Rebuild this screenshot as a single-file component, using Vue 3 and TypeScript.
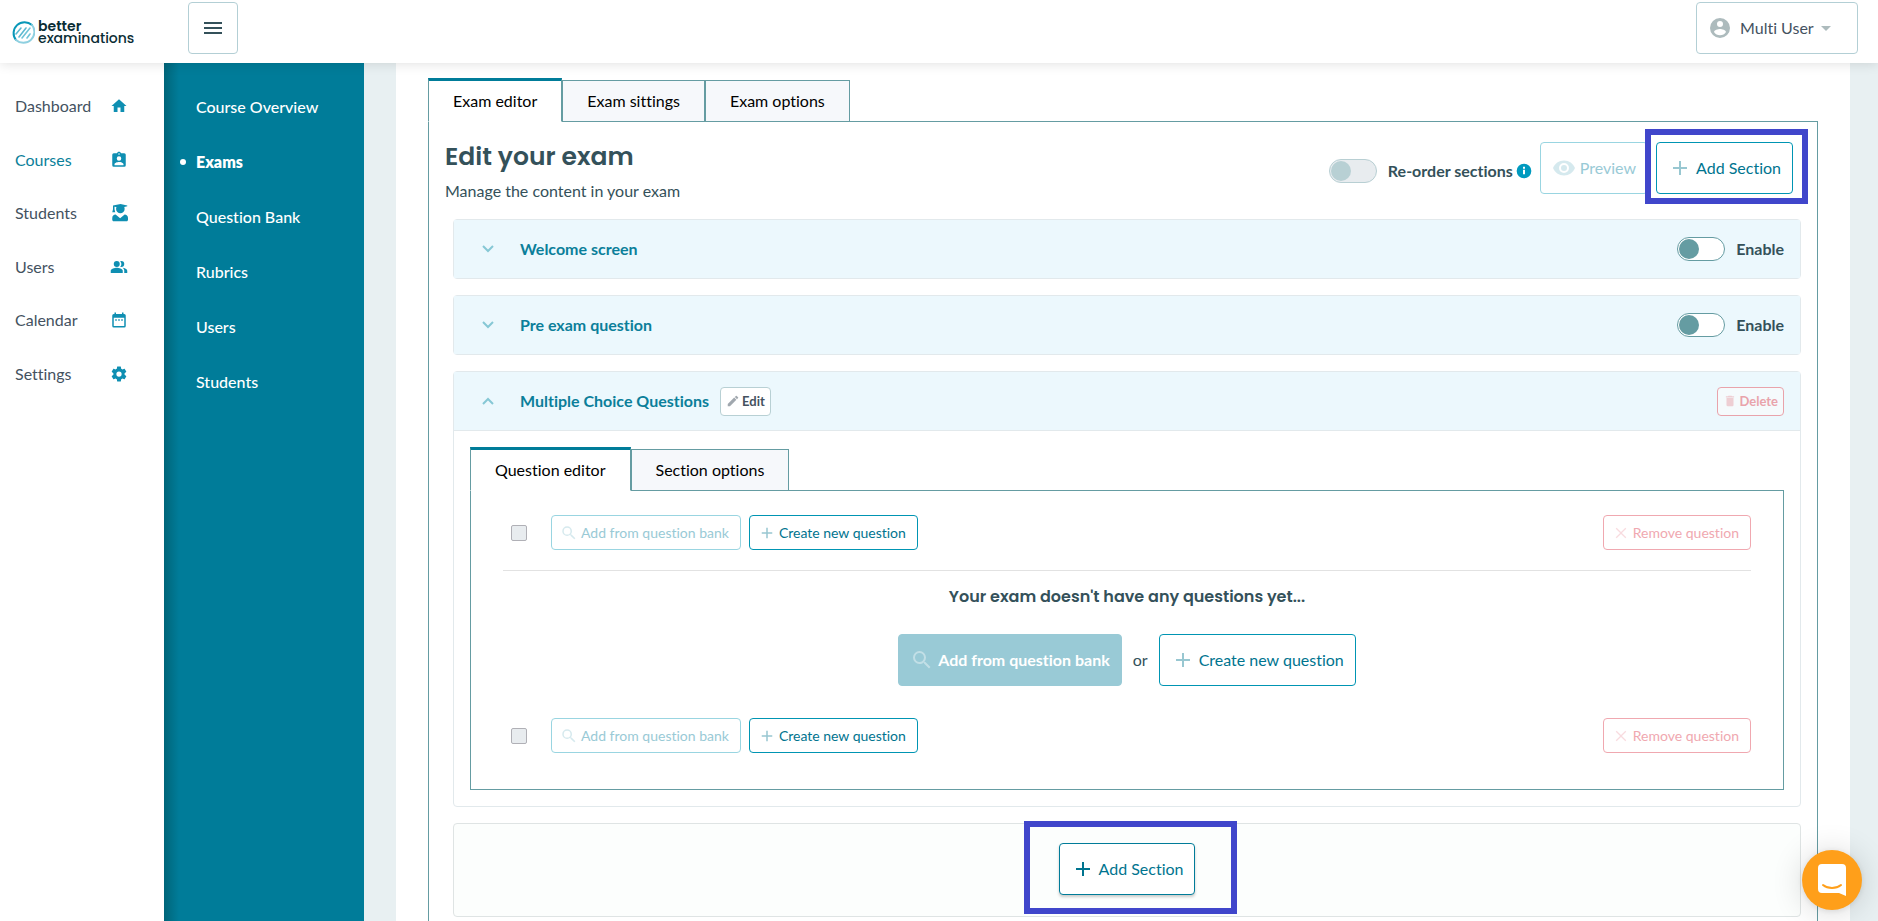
<script setup lang="ts">
import { ref } from 'vue'

interface NavItem {
  label: string
  icon: string
  active?: boolean
}

const icons: Record<string, string> = {
  home: 'M10 20v-6h4v6h5v-8h3L12 3 2 12h3v8z',
  badge:
    'M19 3h-4.18C14.4 1.84 13.3 1 12 1s-2.4.84-2.82 2H5a2 2 0 0 0-2 2v14a2 2 0 0 0 2 2h14a2 2 0 0 0 2-2V5a2 2 0 0 0-2-2zm-7 0a1 1 0 1 1 0 2 1 1 0 0 1 0-2zm0 4a3 3 0 1 1 0 6 3 3 0 0 1 0-6zm6 12H6v-1.4c0-2 4-3.1 6-3.1s6 1.1 6 3.1z',
  graduate:
    'M4 2 14 0l9 2v1l-4 1c.3.8.5 1.6.5 2.500a5.700 5.700 0 0 1-11.400 0c0-.9.2-1.700.5-2.500L6 3.600V7l1 4H3l1-4zM3 21v-2.500c0-2.500 2-4.300 4.500-4.500l6 5 6-5c2.500.2 4.500 2 4.500 4.500V21c0 1.200-.8 2-2 2H5c-1.200 0-2-.8-2-2z',
  people:
    'M16.67 13.13C18.04 14.06 19 15.32 19 17v3h4v-3c0-2.18-3.57-3.47-6.33-3.87zM15 12a4 4 0 0 0 0-8c-.47 0-.91.1-1.33.24a5.98 5.98 0 0 1 0 7.52c.42.14.86.24 1.33.24zM9 12a4 4 0 1 0 0-8 4 4 0 0 0 0 8zm0 1c-2.67 0-8 1.34-8 4v3h16v-3c0-2.66-5.33-4-8-4z',
  calendar:
    'M9 11H7v2h2zm4 0h-2v2h2zm4 0h-2v2h2zm2-7h-1V2h-2v2H8V2H6v2H5a2 2 0 0 0-2 2v14a2 2 0 0 0 2 2h14a2 2 0 0 0 2-2V6a2 2 0 0 0-2-2zm0 16H5V9h14z',
  gear:
    'M19.43 12.98c.04-.32.07-.64.07-.98s-.03-.66-.07-.98l2.11-1.65c.19-.15.24-.42.12-.64l-2-3.46c-.12-.22-.39-.3-.61-.22l-2.49 1c-.52-.4-1.08-.73-1.69-.98l-.38-2.65A.49.49 0 0 0 14 2h-4c-.25 0-.46.18-.49.42l-.38 2.65c-.61.25-1.17.59-1.69.98l-2.49-1c-.23-.09-.49 0-.61.22l-2 3.46c-.13.22-.07.49.12.64l2.11 1.65c-.04.32-.07.65-.07.98s.03.66.07.98l-2.11 1.65c-.19.15-.24.42-.12.64l2 3.46c.12.22.39.3.61.22l2.49-1c.52.4 1.08.73 1.69.98l.38 2.65c.03.24.24.42.49.42h4c.25 0 .46-.18.49-.42l.38-2.65c.61-.25 1.17-.59 1.69-.98l2.49 1c.23.09.49 0 .61-.22l2-3.46c.12-.22.07-.49-.12-.64zM12 15.5a3.5 3.5 0 1 1 0-7 3.5 3.5 0 0 1 0 7z',
  search:
    'M15.5 14h-.79l-.28-.27A6.47 6.47 0 0 0 16 9.5 6.5 6.5 0 1 0 9.5 16c1.61 0 3.09-.59 4.23-1.57l.27.28v.79l5 4.99L20.49 19zm-6 0a4.5 4.5 0 1 1 0-9 4.5 4.5 0 0 1 0 9z',
  plus: 'M19 13h-6v6h-2v-6H5v-2h6V5h2v6h6z',
  close: 'M19 6.2 17.8 5 12 10.8 6.2 5 5 6.2 10.8 12 5 17.8 6.2 19 12 13.2 17.8 19 19 17.8 13.2 12z',
  eye: 'M12 4.5C7 4.5 2.73 7.61 1 12c1.73 4.39 6 7.5 11 7.5s9.27-3.11 11-7.5c-1.73-4.39-6-7.5-11-7.5zM12 17a5 5 0 1 1 0-10 5 5 0 0 1 0 10zm0-8a3 3 0 1 0 0 6 3 3 0 0 0 0-6z',
  pencil:
    'M3 17.25V21h3.75L17.81 9.94l-3.75-3.75zM20.71 7.04a1 1 0 0 0 0-1.41l-2.34-2.34a1 1 0 0 0-1.41 0l-1.83 1.83 3.75 3.75z',
  trash: 'M6 19c0 1.1.9 2 2 2h8a2 2 0 0 0 2-2V7H6zM19 4h-3.5l-1-1h-5l-1 1H5v2h14z',
  user: 'M12 2a10 10 0 1 0 0 20 10 10 0 0 0 0-20zm0 3a3 3 0 1 1 0 6 3 3 0 0 1 0-6zm0 14.2A7.2 7.2 0 0 1 6 16c.03-2 4-3.1 6-3.1s5.97 1.1 6 3.1a7.2 7.2 0 0 1-6 3.2z',
  info: 'M12 1a11 11 0 1 0 0 22 11 11 0 0 0 0-22zm1.5 16h-3v-7h3zm0-8.5h-3v-3h3z',
}

const mainNav: NavItem[] = [
  { label: 'Dashboard', icon: 'home' },
  { label: 'Courses', icon: 'badge', active: true },
  { label: 'Students', icon: 'graduate' },
  { label: 'Users', icon: 'people' },
  { label: 'Calendar', icon: 'calendar' },
  { label: 'Settings', icon: 'gear' },
]
const courseNav = ['Course Overview', 'Exams', 'Question Bank', 'Rubrics', 'Users', 'Students']
const currentCourseNav = 'Exams'

const examTabs = ['Exam editor', 'Exam sittings', 'Exam options']
const examTab = ref('Exam editor')
const sectionTabs = ['Question editor', 'Section options']
const sectionTab = ref('Question editor')

const screens = ref([
  { id: 'welcome', title: 'Welcome screen', enabled: false },
  { id: 'pre-exam', title: 'Pre exam question', enabled: false },
])
</script>

<template>
  <div class="app">
    <header class="topbar">
      <a class="logo" href="#">
        <svg class="logo-mark" viewBox="0 0 24 24" stroke-linecap="round">
          <path d="M5 20A11 11 0 0 1 21 5" stroke="#0897b8" stroke-width="2" />
          <path d="M21 5A11 11 0 0 1 5 20" stroke="#8fd0e0" stroke-width="2" />
          <path d="M5 14 10 8M8 17 15 8" stroke="#5cb9d0" stroke-width="1.6" />
          <path d="M11 18 19 8M16 18 19 14" stroke="#6fc3d7" stroke-width="1.6" />
        </svg>
        <span class="logo-text"><b>better</b><span>examinations</span></span>
      </a>
      <button class="menu-btn" type="button" aria-label="Toggle menu"><i></i><i></i><i></i></button>
      <button class="user-btn" type="button">
        <svg class="user-icon" viewBox="0 0 24 24"><path :d="icons.user" /></svg>
        <span>Multi User</span>
        <svg class="caret" viewBox="0 0 10 5"><path d="M0 0h10L5 5z" /></svg>
      </button>
    </header>

    <div class="body">
      <nav class="main-nav" aria-label="Main">
        <a v-for="n in mainNav" :key="n.label" href="#" :class="{ active: n.active }">
          <span>{{ n.label }}</span>
          <svg viewBox="0 0 24 24"><path :d="icons[n.icon]" /></svg>
        </a>
      </nav>

      <nav class="course-nav" aria-label="Course">
        <a v-for="c in courseNav" :key="c" href="#" :class="{ active: c === currentCourseNav }">{{ c }}</a>
      </nav>

      <main class="content">
        <div class="tabs" role="tablist">
          <button
            v-for="t in examTabs"
            :key="t"
            type="button"
            role="tab"
            :aria-selected="t === examTab"
            :class="{ active: t === examTab }"
            @click="examTab = t"
          >{{ t }}</button>
        </div>

        <section class="panel">
          <div class="panel-head">
            <div>
              <h1>Edit your exam</h1>
              <p>Manage the content in your exam</p>
            </div>
            <div class="actions">
              <label class="switch-label reorder">
                <input class="switch" type="checkbox" role="switch" disabled />
                <span>Re-order sections</span>
                <svg class="info" viewBox="0 0 24 24"><path :d="icons.info" /></svg>
              </label>
              <button class="btn faded preview" type="button" disabled>
                <svg viewBox="0 0 24 24"><path :d="icons.eye" /></svg>Preview
              </button>
              <div class="marked">
                <button class="btn" type="button">
                  <svg viewBox="0 0 24 24"><path :d="icons.plus" /></svg>Add Section
                </button>
                <div class="marker"></div>
              </div>
            </div>
          </div>

          <div class="cards">
            <article v-for="s in screens" :key="s.id" class="card">
              <div class="card-head">
                <svg class="chevron" viewBox="0 0 12 8"><path d="M1 1l5 5 5-5" /></svg>
                <h2>{{ s.title }}</h2>
                <label class="switch-label">
                  <input v-model="s.enabled" class="switch" type="checkbox" role="switch" />
                  <span>Enable</span>
                </label>
              </div>
            </article>

            <article class="card">
              <div class="card-head open">
                <svg class="chevron" viewBox="0 0 12 8"><path d="M1 7l5-5 5 5" /></svg>
                <h2>Multiple Choice Questions</h2>
                <button class="mini" type="button">
                  <svg viewBox="0 0 24 24"><path :d="icons.pencil" /></svg>Edit
                </button>
                <button class="mini danger" type="button" disabled>
                  <svg viewBox="0 0 24 24"><path :d="icons.trash" /></svg>Delete
                </button>
              </div>

              <div class="card-body">
                <div class="tabs" role="tablist">
                  <button
                    v-for="t in sectionTabs"
                    :key="t"
                    type="button"
                    role="tab"
                    :aria-selected="t === sectionTab"
                    :class="{ active: t === sectionTab }"
                    @click="sectionTab = t"
                  >{{ t }}</button>
                </div>

                <div class="questions">
                  <template v-for="row in ['top', 'bottom']" :key="row">
                    <div class="toolbar" :class="row">
                      <input class="tick" type="checkbox" disabled aria-label="Select all questions" />
                      <button class="btn small faded" type="button" disabled>
                        <svg viewBox="0 0 24 24"><path :d="icons.search" /></svg>Add from question bank
                      </button>
                      <button class="btn small" type="button">
                        <svg viewBox="0 0 24 24"><path :d="icons.plus" /></svg>Create new question
                      </button>
                      <button class="btn small remove" type="button" disabled>
                        <svg viewBox="0 0 24 24"><path :d="icons.close" /></svg>Remove question
                      </button>
                    </div>

                    <div v-if="row === 'top'" class="empty">
                      <h3>Your exam doesn't have any questions yet...</h3>
                      <div class="choices">
                        <button class="btn solid" type="button" disabled>
                          <svg viewBox="0 0 24 24"><path :d="icons.search" /></svg>Add from question bank
                        </button>
                        <span>or</span>
                        <button class="btn" type="button">
                          <svg viewBox="0 0 24 24"><path :d="icons.plus" /></svg>Create new question
                        </button>
                      </div>
                    </div>
                  </template>
                </div>
              </div>
            </article>

            <div class="card add-card">
              <div class="marked">
                <button class="btn raised" type="button">
                  <svg viewBox="0 0 24 24"><path :d="icons.plus" /></svg>Add Section
                </button>
                <div class="marker wide"></div>
              </div>
            </div>
          </div>
        </section>
      </main>
    </div>

    <button class="chat" type="button" aria-label="Open chat">
      <svg viewBox="0 0 28 32">
        <path d="M4 0h20a4 4 0 0 1 4 4v28l-7-3H4a4 4 0 0 1-4-4V4a4 4 0 0 1 4-4z" fill="#fff" />
        <path d="M5 21c5 4 13 4 18 0" fill="none" stroke="#ff9f1a" stroke-width="2" stroke-linecap="round" />
      </svg>
    </button>
  </div>
</template>

<style>
body {
  background: #e8f0f2;
}
</style>

<style scoped>
.app {
  display: flex;
  flex-direction: column;
  min-height: 100vh;
  font-family: Lato, 'Liberation Sans', sans-serif;
  font-size: 16px;
  font-variant-ligatures: none;
  line-height: 24px;
  color: #34515a;
}
.app *,
.app *::before {
  box-sizing: border-box;
}
button {
  font: inherit;
  font-variant-ligatures: none;
  cursor: pointer;
}
svg {
  fill: currentColor;
  flex: none;
}
a {
  text-decoration: none;
}

.topbar {
  position: relative;
  z-index: 2;
  display: flex;
  align-items: flex-start;
  height: 63px;
  padding: 2px 20px 0 11px;
  background: #fff;
  box-shadow: 0 0 12px rgba(0, 0, 0, 0.14);
}
.logo {
  display: flex;
  align-items: center;
  gap: 3px;
  width: 177px;
  padding-top: 18px;
  color: #0a2d35;
}
.logo-mark {
  width: 24px;
  height: 24px;
  fill: none;
}
.logo-text {
  display: flex;
  flex-direction: column;
  font-family: Poppins, Inter, sans-serif;
  font-size: 14px;
  font-weight: 500;
  line-height: 12px;
}
.logo-text b {
  font-weight: 600;
}
.menu-btn {
  display: flex;
  flex-direction: column;
  align-items: center;
  justify-content: center;
  gap: 3px;
  width: 50px;
  height: 52px;
  padding: 0;
  background: #fff;
  border: 1px solid #b3cfd5;
  border-radius: 4px;
}
.menu-btn i {
  width: 18px;
  height: 2px;
  background: #34515a;
}
.user-btn {
  display: flex;
  align-items: center;
  width: 162px;
  height: 52px;
  margin-left: auto;
  padding: 0 11px;
  background: #fff;
  color: #44525f;
  border: 1px solid #b3cfd5;
  border-radius: 4px;
}
.user-icon {
  width: 24px;
  height: 24px;
  margin-right: 8px;
  color: #adbbbd;
}
.caret {
  width: 10px;
  height: 5px;
  margin-left: 7px;
  color: #adbbbd;
}

.body {
  display: flex;
  flex: 1;
}
.main-nav,
.content {
  background: #fff;
}
.main-nav {
  width: 164px;
  padding-top: 16px;
}
.main-nav a {
  display: flex;
  align-items: center;
  justify-content: space-between;
  height: 54px;
  padding: 0 36px 0 15px;
  color: #44525f;
}
.main-nav a:nth-child(2n) {
  height: 53px;
}
.main-nav a.active {
  color: #0b7f9a;
}
.main-nav svg {
  width: 18px;
  height: 18px;
  color: #0f8fb2;
}
.course-nav {
  display: flex;
  flex-direction: column;
  width: 200px;
  padding-top: 16px;
  background: linear-gradient(90deg, #006579, #007c99 15px);
}
.course-nav a {
  position: relative;
  height: 55px;
  padding-left: 32px;
  line-height: 55px;
  font-weight: 500;
  color: #fff;
}
.course-nav a.active {
  font-weight: 800;
}
.course-nav a.active::before {
  content: '';
  position: absolute;
  top: 25px;
  left: 16px;
  width: 6px;
  height: 6px;
  border-radius: 50%;
  background: #fff;
}

.content {
  display: flex;
  flex: 1;
  flex-direction: column;
  margin: 0 28px 0 32px;
  padding: 15px 32px 0;
}
.tabs {
  display: flex;
  align-items: flex-end;
  margin-bottom: -1px;
}
.tabs button {
  position: relative;
  height: 42px;
  padding: 0 24px;
  background: #f6f8fb;
  color: #000;
  border: 1px solid #659ca2;
}
.tabs button.active {
  height: 44px;
  background: #fff;
  border-top: 3px solid #007c99;
  border-bottom-color: #fff;
}
.panel {
  flex: 1;
  border: 1px solid #659ca2;
  border-bottom: 0;
}
.panel-head {
  display: flex;
  justify-content: space-between;
  height: 97px;
  padding: 19px 24px 0 16px;
}
h1,
h2,
h3,
p {
  margin: 0;
}
h1 {
  font-family: Poppins, Inter, sans-serif;
  font-size: 25px;
  font-weight: 600;
  line-height: 32px;
}
p {
  margin-top: 6px;
}
.actions {
  display: flex;
  align-items: flex-start;
  padding-top: 1px;
}
.switch-label {
  display: flex;
  align-items: center;
  gap: 11px;
  margin-left: auto;
  font-weight: 700;
}
.switch {
  appearance: none;
  width: 48px;
  height: 24px;
  margin: 0;
  padding: 1px;
  background: #fff;
  border: 1px solid #659ca2;
  border-radius: 12px;
}
.switch::before {
  content: '';
  display: block;
  width: 20px;
  height: 20px;
  border-radius: 50%;
  background: #659ca2;
}
.switch:checked::before {
  margin-left: 24px;
}
.switch:disabled {
  background: #e8ecef;
  border-color: #b8cfd3;
}
.switch:disabled::before {
  background: #b8d0d4;
}
.reorder {
  padding-top: 17px;
  margin-right: 8px;
}
.info {
  width: 16px;
  height: 16px;
  margin-left: -8px;
  color: #009abf;
}
.btn {
  display: inline-flex;
  align-items: center;
  height: 52px;
  padding: 0 11px;
  background: #fff;
  color: #00748f;
  border: 1px solid #0095b3;
  border-radius: 4px;
  white-space: nowrap;
}
.btn svg {
  width: 24px;
  height: 24px;
  margin-right: 4px;
  opacity: 0.4;
}
.btn.faded {
  color: #99cad6;
  border-color: #99d5e1;
}
.btn.solid {
  background: #99cad6;
  border-color: #99cad6;
  color: #fff;
  font-weight: 700;
}
.btn.raised svg {
  opacity: 1;
}
.btn.raised {
  border-color: #007c99;
  box-shadow: 0 2px 3px rgba(0, 0, 0, 0.2);
}
.preview {
  margin-right: 8px;
}
.btn.small {
  height: 35px;
  padding: 0 11px 0 8px;
  font-size: 14px;
}
.btn.small svg {
  width: 18px;
  height: 18px;
  margin-right: 3px;
}
.btn.remove {
  margin-left: auto;
  color: #f0a8b0;
  border-color: #f0a8b0;
}
.marked {
  position: relative;
}
.marker {
  position: absolute;
  inset: -13px -15px -10px -11px;
  border: 6px solid #4046cb;
  pointer-events: none;
}
.marker.wide {
  inset: -22px -42px -19px -35px;
}

.cards {
  display: flex;
  flex-direction: column;
  gap: 16px;
  padding: 0 16px 4px 24px;
}
.card {
  border: 1px solid #e2e9ec;
  border-radius: 4px;
  background: #fff;
}
.card-head {
  display: flex;
  align-items: center;
  height: 58px;
  padding: 0 16px 0 28px;
  background: #ecf8fd;
}
.card-head.open {
  height: 59px;
  border-bottom: 1px solid #e2e9ec;
}
.chevron {
  width: 12px;
  height: 8px;
  margin-right: 26px;
  fill: none;
  stroke: #86c8d5;
  stroke-width: 2;
}
h2 {
  font-size: 16px;
  line-height: 24px;
  font-weight: 700;
  color: #0b7f9a;
}
.mini {
  display: flex;
  align-items: center;
  gap: 2px;
  height: 29px;
  margin-left: 11px;
  padding: 0 5px;
  background: #fff;
  color: #44525f;
  font-size: 13px;
  font-weight: 700;
  border: 1px solid #b8d0d4;
  border-radius: 4px;
}
.mini svg {
  width: 14px;
  height: 14px;
  opacity: 0.5;
}
.mini.danger {
  margin-left: auto;
  background: #f5fafc;
  color: #e9a3ab;
  border-color: #e9a3ab;
}
.card-body {
  padding: 16px;
}
.questions {
  padding: 24px 32px 36px;
  border: 1px solid #659ca2;
}
.toolbar {
  display: flex;
  align-items: center;
  gap: 8px;
  padding-left: 8px;
}
.toolbar.top {
  padding-bottom: 20px;
  border-bottom: 1px solid #e2e2e2;
}
.tick {
  appearance: none;
  width: 16px;
  height: 16px;
  margin: 0 16px 0 0;
  background: #e8ecef;
  border: 1px solid #b0b0b6;
  border-radius: 2px;
}
.empty {
  display: flex;
  flex-direction: column;
  align-items: center;
  padding: 14px 0 32px;
}
h3 {
  font-family: Poppins, Inter, sans-serif;
  font-size: 16px;
  font-weight: 600;
  line-height: 24px;
}
.choices {
  display: flex;
  align-items: center;
  gap: 11px;
  margin-top: 25px;
}
.add-card {
  display: flex;
  justify-content: center;
  padding: 19px 0 21px;
  background: #fcfefd;
  border-color: #dfe4e4;
}

.chat {
  position: fixed;
  right: 16px;
  bottom: 11px;
  z-index: 3;
  display: flex;
  align-items: center;
  justify-content: center;
  width: 60px;
  height: 60px;
  padding: 0;
  color: #fff;
  background: #ff9f1a;
  border: 0;
  border-radius: 50%;
  box-shadow: 0 1px 6px rgba(0, 0, 0, 0.1), 0 2px 32px rgba(0, 0, 0, 0.16);
}
.chat svg {
  width: 28px;
  height: 32px;
}
</style>
